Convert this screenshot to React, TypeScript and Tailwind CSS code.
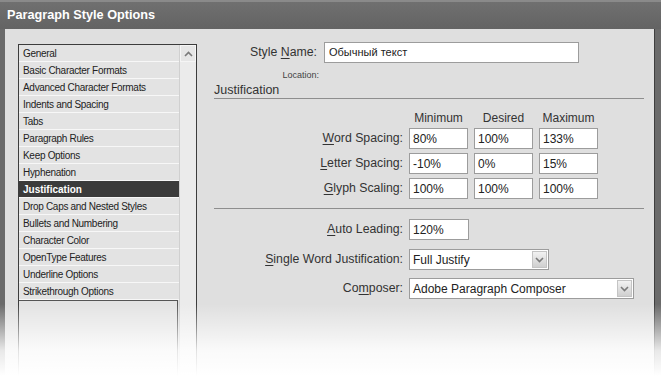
import { Fragment } from "react";

const sections = [
  "General",
  "Basic Character Formats",
  "Advanced Character Formats",
  "Indents and Spacing",
  "Tabs",
  "Paragraph Rules",
  "Keep Options",
  "Hyphenation",
  "Justification",
  "Drop Caps and Nested Styles",
  "Bullets and Numbering",
  "Character Color",
  "OpenType Features",
  "Underline Options",
  "Strikethrough Options",
];

const spacingRows = [
  { key: "W", rest: "ord Spacing:", values: ["80%", "100%", "133%"] },
  { key: "L", rest: "etter Spacing:", values: ["-10%", "0%", "15%"] },
  { key: "G", rest: "lyph Scaling:", values: ["100%", "100%", "100%"] },
];

function Field({ value, width }: { value: string; width: string }) {
  return (
    <div
      className={`${width} h-[21px] bg-white border border-[#9c9c9c] flex items-center px-[3px] text-[12px] text-[#222]`}
    >
      {value}
    </div>
  );
}

function Chevron({ up }: { up?: boolean }) {
  return (
    <svg width="9" height="6" viewBox="0 0 9 6" className={up ? "rotate-180" : ""}>
      <path d="M1 1 L4.5 4.5 L8 1" fill="none" stroke="#7a7a7a" strokeWidth="1.6" />
    </svg>
  );
}

function Select({ value, width }: { value: string; width: string }) {
  return (
    <div
      className={`${width} h-[21px] bg-white border border-[#9c9c9c] flex items-center pl-[3px] pr-[1px] text-[12px] text-[#222]`}
    >
      <span className="flex-1">{value}</span>
      <div className="w-[15px] h-[17px] bg-linear-to-b from-[#f2f2f2] to-[#cfcfcf] border border-[#c4c4c4] flex items-center justify-center">
        <Chevron />
      </div>
    </div>
  );
}

function Label({ k, rest, pre }: { k: string; rest: string; pre?: string }) {
  return (
    <span>
      {pre}
      <u className="underline-offset-[2px]">{k}</u>
      {rest}
    </span>
  );
}

export default function App() {
  return (
    <div className="relative w-[661px] h-[376px] overflow-hidden bg-[#6a6a6a] font-['Liberation_Sans',Arial,sans-serif] text-[#333]">
      {/* title bar */}
      <div className="h-[29px] border-t-2 border-[#8a8a8a] bg-linear-to-b from-[#707070] to-[#636363] flex items-center pl-[7px] text-white font-bold text-[12.7px]">
        Paragraph Style Options
      </div>

      <div className="flex h-[347px] ml-[5px] mr-[6px] bg-[#dfdfdf] border-r border-[#3e3e3e]">
        {/* left list */}
        <div className="pl-[13px] pt-[15px]">
          <div className="w-[179px] h-[340px] border border-[#3c3c3c] flex">
            <div className="w-[160px] flex flex-col">
              {sections.map((s) => (
                <div
                  key={s}
                  className={`h-[17px] border-b border-[#f7f7f7] flex items-center pl-[4px] text-[10px] tracking-[-0.3px] ${
                    s === "Justification"
                      ? "bg-[#3b3b3b] text-white font-bold tracking-[0px]"
                      : "bg-[#e3e3e3] text-[#222]"
                  }`}
                >
                  {s}
                </div>
              ))}
              <div className="flex-1 border-t border-r border-[#555] mr-[1px] bg-[#e3e3e3]" />
            </div>
            <div className="flex-1 bg-[#ebebeb] border-l border-[#d0d0d0]">
              <div className="h-[17px] bg-[#e6e6e6] border border-[#f5f5f5] flex items-center justify-center">
                <Chevron up />
              </div>
            </div>
          </div>
        </div>

        {/* right form */}
        <div className="ml-[17px] w-[430px] flex flex-col text-[12.3px]">
          <div className="mt-[13px] flex items-center">
            <div className="w-[103px] text-right">
              <Label pre="Style " k="N" rest="ame:" />
            </div>
            <div className="ml-[7px] w-[255px] h-[21px] bg-white border border-[#9c9c9c] flex items-center px-[4px] text-[11px] text-[#222] font-['Liberation_Sans','DejaVu_Sans',sans-serif]">
              Обычный текст
            </div>
          </div>
          <div className="mt-[6px] w-[105px] text-right text-[9px] leading-[12px] text-[#444]">
            Location:
          </div>
          <div className="mt-[2px] leading-[15px] text-[12.5px] border-b border-[#8e8e8e]">
            Justification
          </div>

          <div className="mt-[12px] flex leading-[14px] text-[12px]">
            <div className="w-[195px]" />
            {["Minimum", "Desired", "Maximum"].map((h) => (
              <div key={h} className="w-[59px] mr-[6px] text-center">
                {h}
              </div>
            ))}
          </div>

          <div className="mt-[3px] flex flex-col gap-[4px]">
            {spacingRows.map((r) => (
              <div key={r.key} className="flex items-center">
                <div className="w-[189px] text-right mr-[6px]">
                  <Label k={r.key} rest={r.rest} />
                </div>
                {r.values.map((v, i) => (
                  <div key={i} className="mr-[6px]">
                    <Field value={v} width="w-[59px]" />
                  </div>
                ))}
              </div>
            ))}
          </div>

          <div className="mt-[9px] h-px bg-[#8e8e8e]" />

          <div className="mt-[10px] flex items-center">
            <div className="w-[189px] text-right mr-[6px]">
              <Label k="A" rest="uto Leading:" />
            </div>
            <Field value="120%" width="w-[60px]" />
          </div>
          <div className="mt-[9px] flex items-center">
            <div className="w-[189px] text-right mr-[6px]">
              <Label k="S" rest="ingle Word Justification:" />
            </div>
            <Select value="Full Justify" width="w-[140px]" />
          </div>
          <div className="mt-[8px] flex items-center">
            <div className="w-[189px] text-right mr-[6px]">
              <Fragment>
                <Label pre="Co" k="m" rest="poser:" />
              </Fragment>
            </div>
            <Select value="Adobe Paragraph Composer" width="w-[225px]" />
          </div>
        </div>
      </div>

      {/* fade to white at the bottom */}
      <div className="absolute left-0 right-0 bottom-0 h-[72px] bg-linear-to-b from-white/0 via-white/85 via-65% to-white" />
    </div>
  );
}
